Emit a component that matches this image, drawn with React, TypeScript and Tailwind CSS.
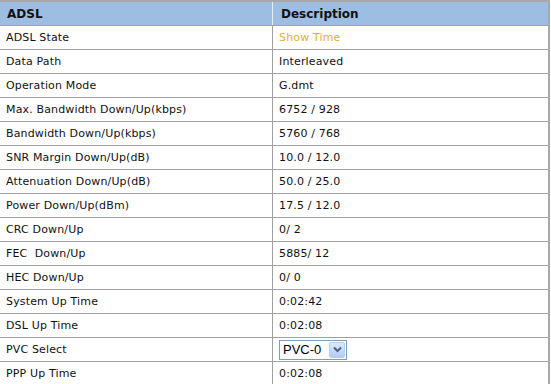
import React from "react";

const rows: [string, string][] = [
  ["ADSL State", "Show Time"],
  ["Data Path", "Interleaved"],
  ["Operation Mode", "G.dmt"],
  ["Max. Bandwidth Down/Up(kbps)", "6752 / 928"],
  ["Bandwidth Down/Up(kbps)", "5760 / 768"],
  ["SNR Margin Down/Up(dB)", "10.0 / 12.0"],
  ["Attenuation Down/Up(dB)", "50.0 / 25.0"],
  ["Power Down/Up(dBm)", "17.5 / 12.0"],
  ["CRC Down/Up", "0/ 2"],
  ["FEC  Down/Up", "5885/ 12"],
  ["HEC Down/Up", "0/ 0"],
  ["System Up Time", "0:02:42"],
  ["DSL Up Time", "0:02:08"],
  ["PVC Select", "__select__"],
  ["PPP Up Time", "0:02:08"],
];

export default function App() {
  return (
    <div className="w-[551px] h-[384px] overflow-hidden bg-white" style={{ fontFamily: '"DejaVu Sans", Verdana, sans-serif' }}>
      <div className="w-[550px] border-t-2 border-r-2 border-[#a8a8a8]">
        <div className="flex h-[24px] bg-[#9dbde3] border-b border-[#a0a0a0]">
          <div className="w-[273px] border-r border-[#e8eef8] pl-[7px] flex items-center text-[12px] font-bold text-[#111]">ADSL</div>
          <div className="flex-1 pl-[8px] flex items-center text-[12px] font-bold text-[#111]">Description</div>
        </div>
        {rows.map(([k, v], i) => (
          <div key={i} className="flex h-[24px] border-b border-[#a0a0a0]">
            <div className="w-[273px] border-r border-[#a0a0a0] pl-[6px] pt-[2px] flex items-center text-[11px] tracking-[0.15px] text-[#111]">
              <span className="whitespace-pre">{k}</span>
            </div>
            <div className="flex-1 pl-[6px] flex items-center text-[11px] tracking-[0.15px] text-[#111]">
              {v === "__select__" ? (
                <div className="flex items-center h-[20px] w-[68px] border border-[#7f9db9] bg-white tracking-normal" style={{ fontFamily: '"Liberation Sans", Arial, sans-serif' }}>
                  <span className="flex-1 pl-[3px] text-[13px] text-black leading-none">PVC-0</span>
                  <span className="w-[16px] h-[16px] mr-[1px] rounded-[2px] bg-gradient-to-b from-[#dde8fc] to-[#b5cbf2] border border-[#b9cdf0] flex items-center justify-center">
                    <svg width="9" height="7" viewBox="0 0 9 7">
                      <path d="M1 1.5 L4.5 5 L8 1.5" fill="none" stroke="#4d6185" strokeWidth="2" />
                    </svg>
                  </span>
                </div>
              ) : (
                <span className={"pt-[2px] " + (v === "Show Time" ? "text-[#e0b030]" : "")}>{v}</span>
              )}
            </div>
          </div>
        ))}
      </div>
    </div>
  );
}
